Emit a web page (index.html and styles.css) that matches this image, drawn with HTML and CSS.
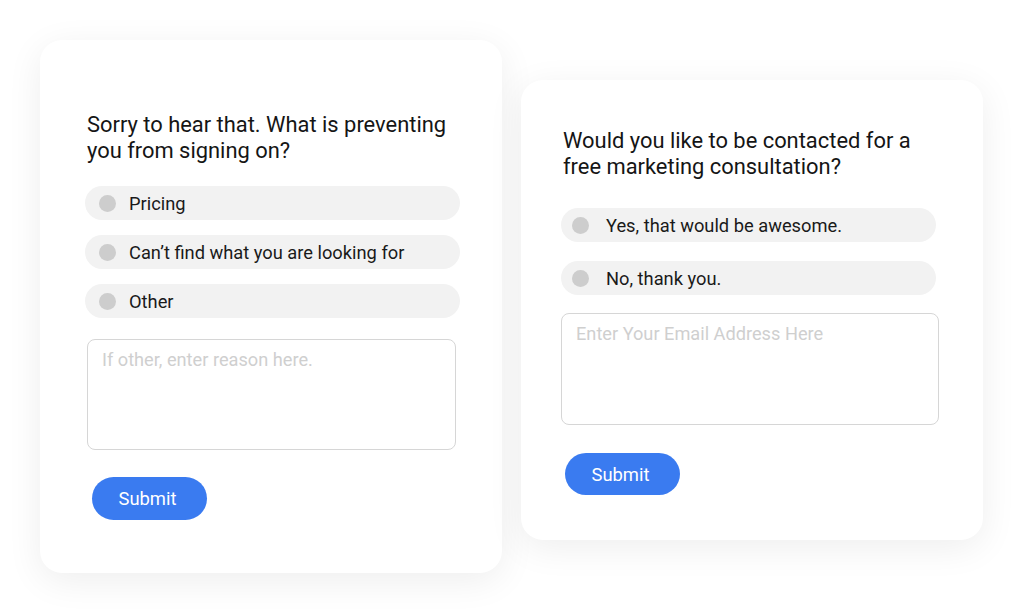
FILE: index.html
```html
<!DOCTYPE html>
<html lang="en">
<head>
    <meta charset="UTF-8">
    <meta name="viewport" content="width=device-width, initial-scale=1.0">
    <title>Survey Cards</title>
    <link rel="stylesheet" href="styles.css">
</head>
<body>
    <div class="stage">
        <form class="card card-reason">
            <h2 class="question">Sorry to hear that. What is preventing you from signing on?</h2>

            <div class="options">
                <label class="option"><span class="dot"></span>Pricing</label>
                <label class="option"><span class="dot"></span>Can’t find what you are looking for</label>
                <label class="option"><span class="dot"></span>Other</label>
            </div>

            <textarea class="field" placeholder="If other, enter reason here."></textarea>

            <button type="button" class="btn">Submit</button>
        </form>

        <form class="card card-contact">
            <h2 class="question">Would you like to be contacted for a free marketing consultation?</h2>

            <div class="options">
                <label class="option"><span class="dot"></span>Yes, that would be awesome.</label>
                <label class="option"><span class="dot"></span>No, thank you.</label>
            </div>

            <textarea class="field" placeholder="Enter Your Email Address Here"></textarea>

            <button type="button" class="btn">Submit</button>
        </form>
    </div>
</body>
</html>
```

FILE: styles.css
```css
body {
    margin: 0;
    min-height: 100vh;
    background: #ffffff;
    font-family: Roboto, 'Liberation Sans', Arial, sans-serif;
    color: #1b1b1b;
}

.stage {
    display: flex;
    align-items: flex-start;
    gap: 19px;
    padding: 40px 0 42px 40px;
}

.card {
    box-sizing: border-box;
    width: 462px;
    background: #ffffff;
    border-radius: 22px;
    box-shadow: 0 8px 36px rgba(0, 0, 0, 0.07);
    display: flex;
    flex-direction: column;
    align-items: flex-start;
}

.card-reason {
    height: 533px;
    padding: 72px 42px 0 45px;
}

.card-contact {
    height: 460px;
    margin-top: 40px;
    padding: 48px 47px 0 40px;
}

.question {
    margin: 0 0 0 2px;
    font-size: 21.9px;
    font-weight: 400;
    line-height: 26px;
    color: #151515;
}

.options {
    display: flex;
    flex-direction: column;
    align-self: stretch;
    gap: 15px;
    margin-top: 22px;
}

.card-contact .options {
    gap: 19px;
    margin-top: 28px;
}

.option {
    display: flex;
    align-items: center;
    height: 34px;
    padding-left: 14px;
    border-radius: 17px;
    background: #f2f2f2;
    font-size: 18.3px;
    color: #1a1a1a;
}

.card-contact .option {
    padding-left: 11px;
}

.dot {
    width: 17px;
    height: 17px;
    border-radius: 50%;
    background: #cdcdcd;
    margin-right: 13px;
    flex-shrink: 0;
}

.card-contact .dot {
    margin-right: 17px;
}

.field {
    box-sizing: border-box;
    display: block;
    width: 369px;
    height: 111px;
    margin: 21px 0 0 2px;
    padding: 9px 14px;
    border: 1px solid #d6d6d6;
    border-radius: 8px;
    font-family: inherit;
    font-size: 18.2px;
    line-height: 22px;
    resize: none;
    outline: none;
}

.card-contact .field {
    width: 378px;
    height: 112px;
    margin: 18px 0 0 0;
}

.field::placeholder {
    color: #cfcfcf;
}

.btn {
    width: 115px;
    height: 43px;
    margin: 27px 0 0 7px;
    padding: 0 4px 0 0;
    border: none;
    border-radius: 22px;
    background: #3a7bf0;
    color: #ffffff;
    font-family: inherit;
    font-size: 18.4px;
    cursor: pointer;
}

.card-contact .btn {
    height: 42px;
    margin: 28px 0 0 4px;
}
```
